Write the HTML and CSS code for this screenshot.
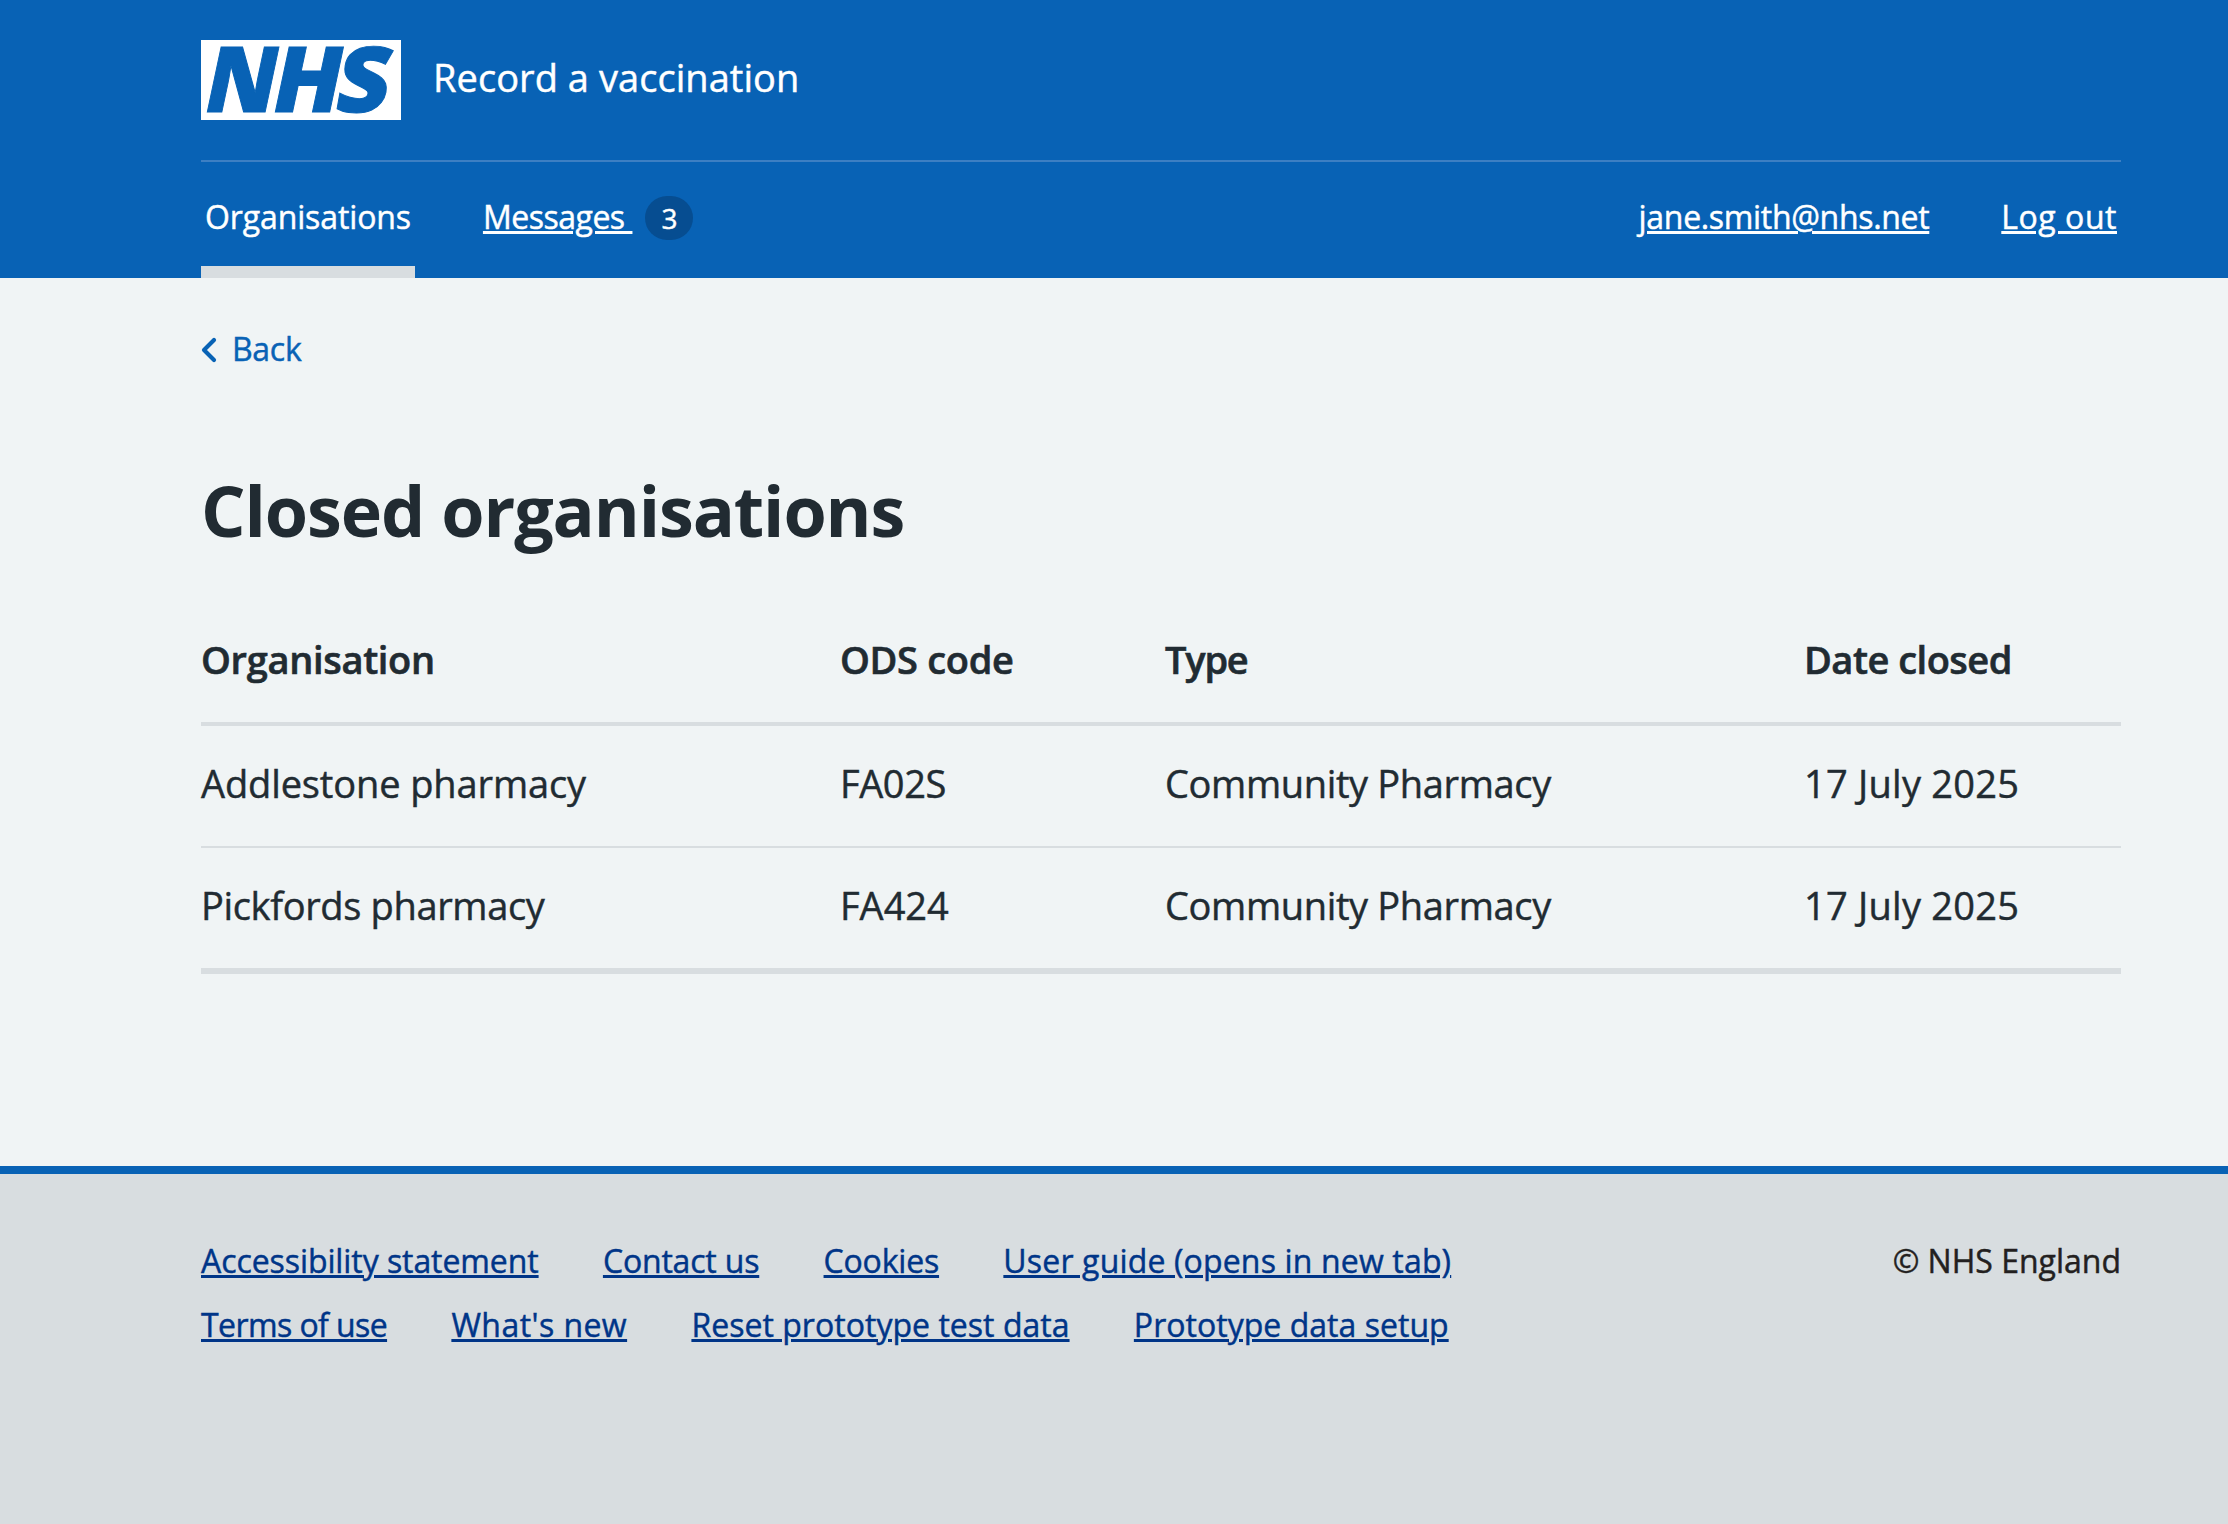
FILE: index.html
```html
<!DOCTYPE html>
<html lang="en">
<head>
<meta charset="utf-8">
<title>Closed organisations – Record a vaccination</title>
<link rel="stylesheet" href="styles.css">
</head>
<body>
<header class="header">
  <div class="container">
    <div class="brand">
      <svg class="logo" viewBox="0 0 200 80" role="img" aria-label="NHS">
        <rect width="200" height="80" fill="#fff"/>
        <g class="logo-letters">
          <text transform="translate(-.3 72) skewX(-12)" textLength="71" lengthAdjust="spacingAndGlyphs">N</text>
          <text transform="translate(67.4 72) skewX(-12)" textLength="68" lengthAdjust="spacingAndGlyphs">H</text>
          <text transform="translate(131.4 72) skewX(-10)" textLength="53" lengthAdjust="spacingAndGlyphs">S</text>
        </g>
      </svg>
      <span class="service-name">Record a vaccination</span>
    </div>
    <nav class="nav">
      <a class="nav-item nav-item-current" href="#"><span class="t-organisations">Organisations</span></a>
      <a class="nav-item" href="#"><span class="link t-messages">Messages </span><span class="badge">3</span></a>
      <a class="nav-item nav-item-end" href="#"><span class="link t-email">jane.smith@nhs.net</span></a>
      <a class="nav-item" href="#"><span class="link t-logout">Log out</span></a>
    </nav>
  </div>
</header>
<main class="main container">
  <a class="back" href="#">
    <svg class="chevron" viewBox="0 0 16 26" aria-hidden="true"><path d="M13 3 3 13l10 10" fill="none" stroke="currentColor" stroke-width="4.2" stroke-linecap="round" stroke-linejoin="round"/></svg>
    <span class="t-back">Back</span>
  </a>
  <h1 class="heading">Closed organisations</h1>
  <table class="table">
    <colgroup><col class="col-org"><col class="col-code"><col class="col-type"><col></colgroup>
    <thead>
      <tr><th>Organisation</th><th>ODS code</th><th class="t-type">Type</th><th class="t-date-head">Date closed</th></tr>
    </thead>
    <tbody>
      <tr><td class="t-name">Addlestone pharmacy</td><td class="t-code">FA02S</td><td class="t-kind">Community Pharmacy</td><td class="t-date">17 July 2025</td></tr>
      <tr><td class="t-kind">Pickfords pharmacy</td><td>FA424</td><td class="t-kind">Community Pharmacy</td><td class="t-date">17 July 2025</td></tr>
    </tbody>
  </table>
</main>
<footer class="footer">
  <div class="container footer-row">
    <div class="footer-links">
      <div class="footer-line">
        <a class="link t-access" href="#">Accessibility statement</a>
        <a class="link t-contact" href="#">Contact us</a>
        <a class="link t-contact" href="#">Cookies</a>
        <a class="link t-guide" href="#">User guide (opens in new tab)</a>
      </div>
      <div class="footer-line">
        <a class="link t-terms" href="#">Terms of use</a>
        <a class="link t-whats" href="#">What's new</a>
        <a class="link t-proto" href="#">Reset prototype test data</a>
        <a class="link t-proto" href="#">Prototype data setup</a>
      </div>
    </div>
    <div class="copyright">© NHS England</div>
  </div>
</footer>
</body>
</html>
```
FILE: styles.css
```css
* { box-sizing: border-box; }
body {
  margin: 0;
  min-height: 1524px;
  display: flex;
  flex-direction: column;
  background: #f0f4f5;
  color: #212b32;
  font: 400 38px/56px "Open Sans", "Noto Sans", sans-serif;
  -webkit-text-stroke: .45px currentColor;
}
a { color: inherit; text-decoration: none; }
.container { width: 1920px; margin-left: 201px; }
.link {
  text-decoration: underline;
  text-decoration-thickness: 3px;
  text-underline-offset: 2px;
}

/* Header */
.header { background: #0862b5; color: #fff; }
.brand { height: 160px; display: flex; align-items: center; gap: 32px; }
.logo { width: 200px; height: 80px; display: block; }
.logo-letters {
  font: 800 91px "Open Sans", sans-serif;
  fill: #0862b5;
  stroke: #0862b5;
  stroke-width: 1;
  -webkit-text-stroke: 0;
}
.service-name { padding-bottom: 6px; letter-spacing: .05px; }
.nav {
  height: 118px;
  border-top: 2px solid #3d7fc3;
  display: flex;
  gap: 64px;
  font-size: 32px;
  line-height: 48px;
  white-space: pre;
}
.nav-item { display: flex; align-items: flex-start; height: 116px; padding: 31px 4px 0; }
.nav-item-current { border-bottom: 12px solid #d8dde0; }
.nav-item-end { margin-left: auto; }
.badge {
  width: 48px;
  height: 44px;
  margin: 3px 0 0 13px;
  border-radius: 22px;
  background: #064d91;
  font-size: 28px;
  line-height: 44px;
  text-align: center;
}
.t-organisations { letter-spacing: -.12px; }
.t-messages { letter-spacing: -.49px; }
.t-email { letter-spacing: -.32px; }
.t-logout { letter-spacing: .54px; }

/* Main content */
.main { padding-top: 47px; flex: none; height: 888px; }
.back {
  display: flex;
  align-items: center;
  gap: 15px;
  width: max-content;
  color: #0862b5;
  font-size: 32px;
  line-height: 48px;
}
.chevron { width: 16px; height: 26px; display: block; margin-top: 1px; }
.t-back { letter-spacing: -.3px; }
.heading {
  margin: 97px 0 0;
  font-size: 70px;
  line-height: 80px;
  font-weight: 680;
  letter-spacing: -1.1px;
  -webkit-text-stroke: 0;
}
.table { width: 1920px; margin-top: 52px; table-layout: fixed; border-collapse: separate; border-spacing: 0; }
.col-org, .col-type { width: 639px; }
.col-code { width: 325px; }
.table th, .table td { padding: 29px 0 35px; text-align: left; border-bottom: 2px solid #d8dde0; }
.table th {
  font-weight: 600;
  letter-spacing: -.32px;
  border-bottom-width: 4px;
  -webkit-text-stroke-width: .6px;
}
.table tbody tr:last-child td { border-bottom-width: 6px; }
.table .t-type { letter-spacing: -1.2px; }
.table .t-date-head { letter-spacing: -.5px; }
.t-name { letter-spacing: -.12px; }
.t-kind { letter-spacing: -.35px; }
.t-code { letter-spacing: -.4px; }
.t-date { letter-spacing: .25px; }

/* Footer */
.footer {
  flex: 1;
  padding-top: 63px;
  border-top: 8px solid #0862b5;
  background: #d8dde0;
  font-size: 32px;
  line-height: 48px;
}
.footer-row { display: flex; justify-content: space-between; }
.footer-links { display: flex; flex-direction: column; gap: 16px; color: #003588; }
.footer-line { display: flex; gap: 64.3px; }
.copyright { color: #231f20; }
.t-access { letter-spacing: -.08px; }
.t-contact { letter-spacing: -.18px; }
.t-guide { letter-spacing: .16px; }
.t-terms { letter-spacing: -.58px; }
.t-whats { letter-spacing: .44px; }
.t-proto { letter-spacing: .03px; }
```
